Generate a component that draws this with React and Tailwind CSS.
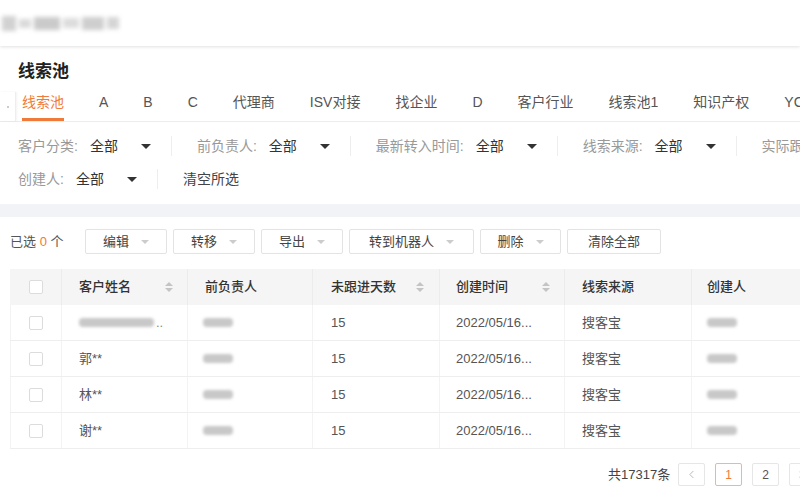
import { ChevronLeft } from "lucide-react";

const tabs = ["线索池", "A", "B", "C", "代理商", "ISV对接", "找企业", "D", "客户行业", "线索池1", "知识产权", "YC"];

const filters1 = ["客户分类:", "前负责人:", "最新转入时间:", "线索来源:"];

const actions = [
  { text: "编辑", w: "w-[82px]", caret: true },
  { text: "转移", w: "w-[82px]", caret: true },
  { text: "导出", w: "w-[82px]", caret: true },
  { text: "转到机器人", w: "w-[125px]", caret: true },
  { text: "删除", w: "w-[81px]", caret: true },
  { text: "清除全部", w: "w-[94px]", caret: false },
];

const rows = [null, "郭**", "林**", "谢**"];

const Blur = ({ className }) => (
  <div className={`h-[9px] rounded-sm bg-[#c8c8c8] blur-[1.5px] ${className}`} />
);

const Caret = () => (
  <span className="ml-[23px] inline-block h-0 w-0 border-x-[5px] border-t-[5px] border-x-transparent border-t-[#333]" />
);

const SortIcon = () => (
  <svg width="10" height="12" viewBox="0 0 10 12" className="shrink-0">
    <path d="M5 1 L9 5 H1 Z" fill="#c4c4c4" />
    <path d="M5 11 L9 7 H1 Z" fill="#c4c4c4" />
  </svg>
);

const Checkbox = () => (
  <div className="h-[14px] w-[14px] rounded-[2px] border border-[#dcdcdc] bg-white" />
);

const Sep = () => <div className="mx-[20px] mr-[25px] h-[20px] w-px bg-[#eee]" />;

const PageBox = ({ children, active }) => (
  <div
    className={`w-[27px] h-[23px] flex items-center justify-center border rounded-[2px] text-[12px] ${
      active ? "border-[#f5b48f] text-[#f07a3a]" : "border-[#e6e6e6] text-[#555]"
    }`}
  >
    {children}
  </div>
);

export default function App() {
  return (
    <div className="w-[800px] h-[500px] overflow-hidden bg-white text-[#333] font-['Liberation_Sans','Noto_Sans_CJK_SC',sans-serif]">
      {/* top bar */}
      <div className="h-[46px] flex items-center shadow-[0_1px_3px_rgba(0,0,0,0.12)] relative z-10">
        <div className="flex items-center gap-[3px] ml-[2px] blur-[2px] opacity-80">
          <div className="h-[15px] w-[14px] bg-[#c6c6c6]" />
          <div className="h-[9px] w-[12px] bg-[#d0d0d0]" />
          <div className="h-[13px] w-[26px] bg-[#bdbdbd]" />
          <div className="h-[10px] w-[16px] bg-[#d4d4d4]" />
          <div className="h-[13px] w-[22px] bg-[#c2c2c2]" />
          <div className="h-[12px] w-[12px] bg-[#cbcbcb]" />
        </div>
      </div>

      {/* title + tabs */}
      <div className="pt-[13px]">
        <div className="pl-[18px] text-[17px] font-bold text-[#222] leading-[26px]">线索池</div>
        <div className="mt-[7px] flex items-stretch h-[30px] border-b border-[#ececec] text-[14px] text-[#555] whitespace-nowrap">
          <div className="w-[16px] shrink-0 border-r border-[#eee] shadow-[1px_0_2px_rgba(0,0,0,0.05)] flex items-center justify-center">
            <div className="h-[2px] w-[2px] rounded-full bg-[#bbb]" />
          </div>
          <div className="flex pl-[6px] gap-[35px]">
            {tabs.map((t, i) => (
              <div
                key={t}
                className={`flex items-start leading-[20px] border-b-[3px] ${
                  i === 0 ? "border-[#f07a3a] text-[#f07a3a]" : "border-transparent"
                }`}
              >
                {t}
              </div>
            ))}
          </div>
        </div>
      </div>

      {/* filters */}
      <div className="pl-[18px] pt-[13px] pb-[14px] text-[14px] whitespace-nowrap">
        <div className="flex items-center h-[22px]">
          {filters1.map((f) => (
            <div key={f} className="flex items-center shrink-0">
              <span className="text-[#999]">{f}</span>
              <span className="ml-[12px]">全部</span>
              <Caret />
              <Sep />
            </div>
          ))}
          <span className="text-[#999]">实际跟进时间:</span>
        </div>
        <div className="flex items-center h-[22px] mt-[11px]">
          <span className="text-[#999]">创建人:</span>
          <span className="ml-[12px]">全部</span>
          <Caret />
          <Sep />
          <span className="text-[#444]">清空所选</span>
        </div>
      </div>

      <div className="h-[13px] bg-[#f2f3f7]" />

      {/* actions */}
      <div className="pl-[10px] pt-[12px] flex items-center text-[13px] whitespace-nowrap">
        <span className="text-[#555] w-[75px]">
          已选 <span className="text-[#f07a3a]">0</span> 个
        </span>
        <div className="flex gap-[6px]">
          {actions.map((a) => (
            <div
              key={a.text}
              className={`${a.w} h-[25px] flex items-center justify-center border border-[#e3e3e3] rounded-[2px] text-[#444]`}
            >
              {a.text}
              {a.caret && (
                <span className="ml-[12px] inline-block h-0 w-0 border-x-[4px] border-t-[4px] border-x-transparent border-t-[#ccc]" />
              )}
            </div>
          ))}
        </div>
      </div>

      {/* table */}
      <div className="ml-[10px] mt-[15px] w-[810px] text-[13px] whitespace-nowrap">
        <div className="flex h-[36px] bg-[#f5f5f5] font-medium text-[#333]">
          <div className="w-[52px] flex items-center justify-center border-r border-[#ececec]">
            <Checkbox />
          </div>
          <div className="w-[126px] flex items-center justify-between pl-[17px] pr-[13px] border-r border-[#ececec]">
            客户姓名 <SortIcon />
          </div>
          <div className="w-[125px] flex items-center pl-[17px] border-r border-[#ececec]">前负责人</div>
          <div className="w-[127px] flex items-center justify-between pl-[18px] pr-[14px] border-r border-[#ececec]">
            未跟进天数 <SortIcon />
          </div>
          <div className="w-[125px] flex items-center justify-between pl-[16px] pr-[13px] border-r border-[#ececec]">
            创建时间 <SortIcon />
          </div>
          <div className="w-[127px] flex items-center pl-[17px] border-r border-[#ececec]">线索来源</div>
          <div className="flex-1 flex items-center pl-[15px]">创建人</div>
        </div>
        {rows.map((name, i) => (
          <div key={i} className="flex h-[36px] border-b border-[#eeeeee] text-[#555]">
            <div className="w-[52px] flex items-center justify-center border-r border-l border-[#f3f3f3]">
              <Checkbox />
            </div>
            <div className="w-[126px] flex items-center pl-[17px] border-r border-[#f3f3f3]">
              {name ? (
                name
              ) : (
                <div className="flex items-center">
                  <Blur className="w-[75px]" />
                  <span className="ml-[2px] text-[#888]">..</span>
                </div>
              )}
            </div>
            <div className="w-[125px] flex items-center pl-[15px] border-r border-[#f3f3f3]">
              <Blur className="w-[30px]" />
            </div>
            <div className="w-[127px] flex items-center pl-[18px] border-r border-[#f3f3f3]">15</div>
            <div className="w-[125px] flex items-center pl-[16px] border-r border-[#f3f3f3]">2022/05/16...</div>
            <div className="w-[127px] flex items-center pl-[17px] border-r border-[#f3f3f3]">搜客宝</div>
            <div className="flex-1 flex items-center pl-[15px]">
              <Blur className="w-[30px]" />
            </div>
          </div>
        ))}
      </div>

      {/* pagination */}
      <div className="mt-[14px] flex items-center pl-[608px] text-[13px] whitespace-nowrap">
        <span className="text-[#444] w-[70px] shrink-0">共17317条</span>
        <div className="flex gap-[10px] shrink-0">
          <PageBox>
            <ChevronLeft size={13} strokeWidth={1.5} className="text-[#aaa]" />
          </PageBox>
          <PageBox active>1</PageBox>
          <PageBox>2</PageBox>
          <PageBox>3</PageBox>
        </div>
      </div>
    </div>
  );
}
